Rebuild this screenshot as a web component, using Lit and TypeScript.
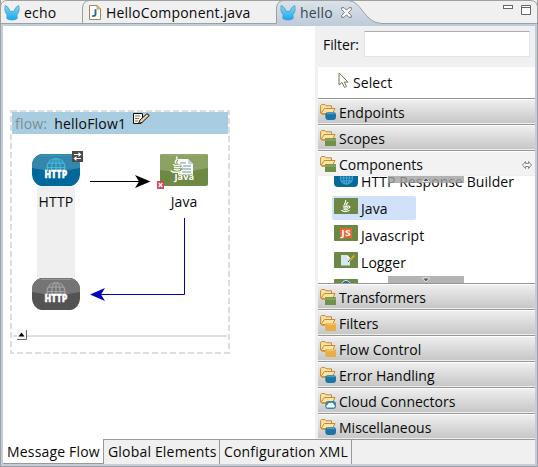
import { LitElement, html, css, svg } from "lit";
import { customElement } from "lit/decorators.js";

const muleIcon = html`<svg width="16" height="17" viewBox="0 0 16 17">
  <defs><linearGradient id="m" x1="0" y1="0" x2="0" y2="1"><stop offset="0" stop-color="#8bd2f0"/><stop offset="1" stop-color="#12aaf0"/></linearGradient></defs>
  <path d="M1.200 1.500C.5 5.500 .8 8.500 3 10.500L2.800 14.500Q4.500 16 8 16T13.200 14.500L13 10.500C15.200 8.500 15.500 5.500 14.800 1.500Q11.500 2.500 9.800 7.300H6.200Q4.500 2.500 1.200 1.500Z" fill="url(#m)" stroke="#4b9cc0" stroke-width=".8"/>
</svg>`;

const fileIcon = html`<svg width="12" height="15" viewBox="0 0 12 15">
  <path d="M.5 .5H8L11.500 4V14.500H.5Z" fill="#fdfdf8" stroke="#9b8a5a"/><path d="M8 .5V4H11.500Z" fill="#e8d59a" stroke="#a88b45" stroke-width=".7"/>
  <path d="M6.500 4.300V9.500Q6.300 11.300 3.300 11" fill="none" stroke="#2c64a0" stroke-width="1.900"/>
</svg>`;

const globe = (cx: number, cy: number, r: number, color: string) => svg`<g fill="none" stroke=${color} stroke-width="1.200">
  <circle cx=${cx} cy=${cy} r=${r}/><ellipse cx=${cx} cy=${cy} rx=${r * 0.48} ry=${r}/>
  <path d=${`M${cx} ${cy - r}V${cy + r}M${cx - r} ${cy}H${cx + r}M${cx - r * 0.86} ${cy - r * 0.48}H${cx + r * 0.86}M${cx - r * 0.86} ${cy + r * 0.48}H${cx + r * 0.86}`}/></g>`;

const httpNode = (hi: string, lo: string, line: string, edge: string) => html`<svg width="48" height="32" viewBox="0 0 48 32">
  <path d="M9 0H39Q48 3 48 11V21Q47 30 39 32H9Q1 30 0 21V11Q0 3 9 0Z" fill=${lo}/>
  <path d="M9 0H39Q48 3 48 11V14Q24 19 0 14V11Q0 3 9 0Z" fill=${hi}/>
  <path d="M9 1.500H39" stroke=${edge}/>
  ${globe(24, 13.5, 9, line)}
  <rect x="12" y="17" width="24" height="8" fill=${lo}/>
  <text x="12.500" y="24.200" textLength="23" lengthAdjust="spacingAndGlyphs" font-family="Open Sans, sans-serif" font-weight="800" font-size="9.800" fill="#fff" stroke="#fff" stroke-width=".35">HTTP</text>
</svg>`;

const cup = (x: number, y: number, s: number, color: string) => svg`<g transform=${`translate(${x} ${y}) scale(${s})`} fill="none" stroke=${color} stroke-width="1.700">
  <path d="M6 8C2 5 9 4 6 0M8.500 8C6 6 10 5 10 3M2 9Q7 11 11 9M3 11.500Q7 13.500 10 11.500M3 14Q7 16 10 14M0 15.500Q1 18 7 17.500Q12 17 12.500 15.500M11 9.500Q14 9 12.500 11.500L10.500 13"/></g>`;

const javaNode = html`<svg width="48" height="32" viewBox="0 0 48 32">
  <rect width="48" height="32" rx="2" fill="#6e8944"/><path d="M2 0H46Q48 0 48 2V14Q24 20 0 16V2Q0 0 2 0Z" fill="#8ba264"/>
  <path d="M2 1H46" stroke="#98ad76"/>
  <path d="M18 5H28L33 10V21H18Z" fill="#fff"/><path d="M28 5V10H33Z" fill="#c4d3d8"/>
  <path d="M20 9H26M22 12H31M22 15H31M22 18H31" stroke="#69939f"/>
  <path d="M12 10H21L23 13L20 19H12Z" fill="#7b9454"/>
  ${cup(11, 2.5, 0.9, "#f2f7e9")}
  <text x="14.500" y="26" textLength="19.500" lengthAdjust="spacingAndGlyphs" font-family="Open Sans, sans-serif" font-weight="700" font-size="9.500" fill="#fff" stroke="#6e8944" stroke-width="1.200" paint-order="stroke">Java</text>
</svg>`;

const folder = (kind: string) => {
  const fills: Record<string, string> = { blue: "#1b76a5", orange: "#e9ae43", cloud: "#3788ad" };
  const shape = kind === "green"
    ? svg`<rect x="5" y="8" width="11" height="8" fill="#71904a"/><path d="M5 8.500H16V11H5Z" fill="#86a060"/>`
    : svg`<rect x="5.300" y="8" width="10.700" height="8" rx=${kind === "orange" ? 1.5 : 3} fill=${fills[kind]}/>
      ${kind === "cloud" ? svg`<path d="M7 14.500Q5.500 13 7.500 12Q8 9.500 10.500 10Q13 9 14 12Q15.800 13 14 14.500Z" fill="#fff"/>` : svg`<path d="M7 9.200H14.500" stroke="#fff" stroke-opacity=".25" stroke-width="2"/>`}`;
  return html`<svg width="16" height="16" viewBox="0 0 16 16">
    <path d="M.6 9V1.500L1.600 .6H5L6 1.800H11.500V5" fill="#fae3a6" stroke="#c58a35"/>
    <path d="M1 9.500L4.300 4.500H15L12.500 9.500Z" fill="#fbe3a0" stroke="#c58a35"/>
    <path d="M.8 9.500H5.500V11H2Z" fill="#d99c45"/>${shape}</svg>`;
};

const compIcon = (kind: string) => html`<svg class="cicon" width="24" height="16" viewBox="0 0 24 16">
  ${kind === "http"
    ? svg`<rect width="24" height="16" rx="4" fill="#07699a"/>${globe(12.5, 7, 6, "#43a5cc")}`
    : svg`<rect width="24" height="16" rx=".7" fill="#6d8843"/>`}
  ${kind === "java" ? cup(7.5, 2, 0.65, "#fff") : ""}
  ${kind === "js" ? svg`<rect x="6" y="3" width="12" height="10" fill="#ed6430"/><text x="7.300" y="11.200" textLength="9.500" lengthAdjust="spacingAndGlyphs" font-family="Open Sans, sans-serif" font-weight="700" font-size="8.500" fill="#fff">JS</text>` : ""}
  ${kind === "log" ? svg`<path d="M7 3H13L16 6V13.500H7Z" fill="#d3e9ed"/><path d="M13 3V6H16Z" fill="#fff"/><path d="M15.500 8.500L20.500 3.500" stroke="#d6a044" stroke-width="1.800"/><path d="M14 10L15.500 8.500" stroke="#333"/>` : ""}
  ${kind === "globe" ? svg`<circle cx="12" cy="6" r="4.500" fill="#1b76a5" stroke="#d0e8f0"/>` : ""}
</svg>`;

@customElement("app-root")
export class AppRoot extends LitElement {
  static styles = css`
    :host { display: block; width: 538px; height: 467px; font: 14px/20px "Open Sans", "Noto Sans", sans-serif; color: #0a0a0a; }
    * { box-sizing: border-box; }
    svg { display: block; flex: none; }
    span { white-space: nowrap; }
    .window { display: flex; flex-direction: column; width: 538px; height: 467px; border: 1px solid #a0a0a0; border-top: 0; background: #bfccd9; padding: 0 2px 2px; overflow: hidden; }
    .tabs { position: relative; height: 26px; margin: 0 -3px; flex: none; display: flex; letter-spacing: .2px; }
    .chrome { position: absolute; left: 0; top: 0; }
    .tab { position: relative; display: flex; gap: 4px; height: 24px; padding-top: 1px; align-items: center; }
    .t1 { width: 83px; padding-left: 4px; }
    .t2 { width: 194px; padding-left: 6px; gap: 5px; }
    .t3 { flex: 1; padding-left: 3px; color: #3b4654; }
    .close { margin-left: 4px; }
    .body { flex: 1; display: flex; min-height: 0; background: #fff; }
    .canvas { position: relative; width: 312px; flex: none; }
    .wires { position: absolute; left: 0; top: 0; }
    .title { position: absolute; left: 9px; top: 86px; width: 216px; height: 22px; background: #a8cde0; display: flex; gap: 7px; padding: 0 3px; line-height: 23px; letter-spacing: .2px; }
    .dim { color: #7b8d94; }
    .pencil { margin-top: 1px; }
    .node { position: absolute; display: flex; flex-direction: column; align-items: center; gap: 6px; width: 48px; }
    .n1 { left: 29px; top: 128px; letter-spacing: .2px; }
    .n2 { left: 157px; top: 128px; }
    .n3 { left: 29px; top: 252px; }
    .badge { position: absolute; left: 40px; top: -3px; }
    .err { position: absolute; left: -3px; top: 27px; }
    .palette { width: 220px; background: #f0f0f0; padding-left: 3px; display: flex; flex-direction: column; }
    .filter { height: 41px; flex: none; display: flex; padding: 5px 5px 0; gap: 5px; line-height: 27px; letter-spacing: -.1px; }
    .input { flex: 1; height: 26px; border: 1px solid #dfe3ea; border-top-color: #abadb3; border-radius: 1px; background: #fff; }
    .select { height: 31px; flex: none; background: #fff; display: flex; align-items: center; padding-left: 20px; gap: 3px; letter-spacing: .1px; }
    .select svg { margin-top: -4px; }
    .head { height: 26px; flex: none; border-top: 1px solid #969696; box-shadow: inset 0 1px #fff, inset 0 -1px #eee; background: linear-gradient(#f0f0f0, #c5c5c5); display: flex; align-items: center; gap: 3px; padding: 2px 3px 0 2px; }
    .head > svg:first-child { margin-top: -1px; }
    .tight { letter-spacing: -.15px; }
    .open { background: #f2f2f2; }
    .head .pin { margin-left: auto; }
    .list { position: relative; height: 107px; flex: none; background: #fff; overflow: hidden; padding: 0 14px; }
    .rows { margin-top: -7px; display: flex; flex-direction: column; gap: 3px; letter-spacing: .07px; }
    .row { display: flex; align-items: center; gap: 3px; height: 24px; padding: 1px 2px 0; width: 84px; border-radius: 2px; }
    .sel { background: #cfe2fa; }
    .row .cicon { margin-top: -5px; }
    .more { position: absolute; left: 70px; width: 76px; height: 7px; background: rgba(160,160,160,.8); display: flex; justify-content: center; }
    .up { top: 0; } .down { bottom: 0; }
    .bottom { height: 25px; flex: none; display: flex; background: #f0f0f0; letter-spacing: .18px; }
    .bt { border-top: 1px solid #999; border-right: 1px solid #999; padding: 2px 0 0 4px; line-height: 19px; flex: none; }
    .on { width: 100px; background: #fff; border-top: 0; padding-top: 3px; border-bottom: 1px solid #999; border-right: 0; }
    .b2 { width: 117px; border-left: 1px solid #999; } .b3 { width: 132px; }
    .rest { flex: 1; border-top: 1px solid #999; }
  `;

  head(name: string, kind: string, open = false) {
    return html`<div class="head ${open ? "open" : ""}">${folder(kind)}<span class=${name === "Transformers" ? "tight" : ""}>${name}</span>
      ${open ? html`<svg class="pin" width="10" height="8" viewBox="0 0 10 8"><path d="M3.500 .5L.5 4L3.500 7.500V5.500H6.500V7.500L9.500 4L6.500 .5V2.500H3.500Z" fill="#fff" stroke="#777" stroke-width=".9"/></svg>` : ""}</div>`;
  }

  row(name: string, kind: string, sel = false) {
    return html`<div class="row ${sel ? "sel" : ""}">${compIcon(kind)}<span>${name}</span></div>`;
  }

  render() {
    return html`<div class="window">
      <div class="tabs">
        <svg class="chrome" width="538" height="26" viewBox="0 0 538 26">
          <rect width="538" height="26" fill="#f0f0f0"/>
          <defs><linearGradient id="act" x1="0" y1="0" x2="0" y2="1"><stop offset="0" stop-color="#dce4eb"/><stop offset="1" stop-color="#bfccd9"/></linearGradient></defs>
          <path d="M1 24H537V26H1Z" fill="#bfccd9"/>
          <path d="M276.500 24V8Q277 .5 284 .5H348C362 .5 364 23.500 382 23.500V24Z" fill="url(#act)"/>
          <path d="M.5 26V7Q1 .5 7 .5H531Q537 1 537.500 7V26M82.500 23.500V8Q83 1 89 .5M0 23.500H276.500V8Q277 .5 284 .5H348C362 .5 364 23.500 382 23.500H538" fill="none" stroke="#a0a0a0"/>
          <rect x="503.500" y="5.500" width="9" height="3" fill="#fff" stroke="#666"/>
          <path d="M521.500 5.500H530.500V14.500H521.500ZM521.500 7.500H530.500" fill="#fff" stroke="#666"/>
        </svg>
        <div class="tab t1">${muleIcon}<span>echo</span></div>
        <div class="tab t2">${fileIcon}<span>HelloComponent.java</span></div>
        <div class="tab t3">${muleIcon}<span>hello</span>
          <svg class="close" width="11" height="11" viewBox="0 0 11 11"><path d="M.7 .7H3L5.500 3.200L8 .7H10.300V2.500L7.500 5.500L10.300 8.500V10.300H8L5.500 7.800L3 10.300H.7V8.500L3.500 5.500L.7 2.500Z" fill="#fff" stroke="#777"/></svg></div>
      </div>
      <div class="body">
        <div class="canvas">
          <svg class="wires" width="312" height="413" viewBox="3 26 312 413">
            <rect x="11" y="111" width="218" height="242" fill="none" stroke="#dedede" stroke-width="2" stroke-dasharray="6 3"/>
            <rect x="37" y="186" width="38" height="94" fill="#efefef"/>
            <path d="M13 336H227" stroke="#dedede" stroke-width="2"/>
            <path d="M90 181.500H140" stroke="#000"/><path d="M150.500 181.500L135 175L139 181.500L135 188Z" fill="#000"/>
            <path d="M184.500 218V294.500H100" fill="none" stroke="#0000bf"/><path d="M90 294.500L105 288L101 294.500L105 301Z" fill="#0000bf"/>
            <rect x="17" y="330" width="10" height="10" fill="#f5f5f5"/><path d="M17 339.500H26.500V330" fill="none" stroke="#666"/><path d="M18.500 336.500H24.500L21.500 332.500Z" fill="#000"/>
          </svg>
          <div class="title"><span class="dim">flow:</span><span>helloFlow1</span>
            <svg class="pencil" width="17" height="12" viewBox="0 0 17 12"><path d="M.5 .5H9.500V6L8 10.500H.5Z" fill="#fff7df" stroke="#111"/><path d="M2 3H7M2 5.500H6M2 8H5" stroke="#555" stroke-width=".8"/><path d="M5.500 10.500L7 7L14 .7L16.300 2.500L9 9.500Z" fill="#e7d6b6" stroke="#111"/><path d="M14 .7L16.300 2.500" stroke="#b03030"/></svg></div>
          <div class="node n1">${httpNode("#3486aa", "#00689a", "#45b9dc", "#3795bd")}<span>HTTP</span>
            <svg class="badge" width="11" height="11" viewBox="0 0 11 11"><rect width="11" height="11" fill="#4a4a4a"/><path d="M2 3.500H8M3 7.500H9" stroke="#fff"/><path d="M6.500 1L9.500 3.500L6.500 6ZM4.500 5L1.500 7.500L4.500 10Z" fill="#fff"/></svg></div>
          <div class="node n2">${javaNode}<span>Java</span>
            <svg class="err" width="7" height="8" viewBox="0 0 7 8"><rect width="7" height="8" fill="#d9465b"/><path d="M1.700 2L5.300 6M5.300 2L1.700 6" stroke="#fff" stroke-width="1.300"/></svg></div>
          <div class="node n3">${httpNode("#757575", "#535353", "#a0a0a0", "#929292")}</div>
        </div>
        <div class="palette">
          <div class="filter"><span>Filter:</span><div class="input"></div></div>
          <div class="select"><svg width="12" height="17" viewBox="0 0 12 17"><path d="M1 1V13L4 10.500L6.500 15.500L8.500 14.500L6.300 10H10Z" fill="#fffdf0" stroke="#777766"/></svg><span>Select</span></div>
          ${this.head("Endpoints", "blue")}${this.head("Scopes", "green")}${this.head("Components", "green", true)}
          <div class="list"><div class="rows">
            ${this.row("HTTP Response Builder", "http")}${this.row("Java", "java", true)}${this.row("Javascript", "js")}${this.row("Logger", "log")}${this.row("", "globe")}</div>
            <div class="more up"><svg width="8" height="7" viewBox="0 0 8 7"><path d="M.5 5.500L4 1.500L7.500 5.500Z" fill="#555" stroke="#fff" stroke-width=".8"/></svg></div>
            <div class="more down"><svg width="8" height="7" viewBox="0 0 8 7"><path d="M.5 2L4 6L7.500 2Z" fill="#555" stroke="#fff" stroke-width=".8"/></svg></div>
          </div>
          ${this.head("Transformers", "green")}${this.head("Filters", "orange")}${this.head("Flow Control", "orange")}${this.head("Error Handling", "blue")}${this.head("Cloud Connectors", "cloud")}${this.head("Miscellaneous", "blue")}
        </div>
      </div>
      <div class="bottom"><span class="bt on">Message Flow</span><span class="bt b2">Global Elements</span><span class="bt b3">Configuration XML</span><div class="rest"></div></div>
    </div>`;
  }
}
